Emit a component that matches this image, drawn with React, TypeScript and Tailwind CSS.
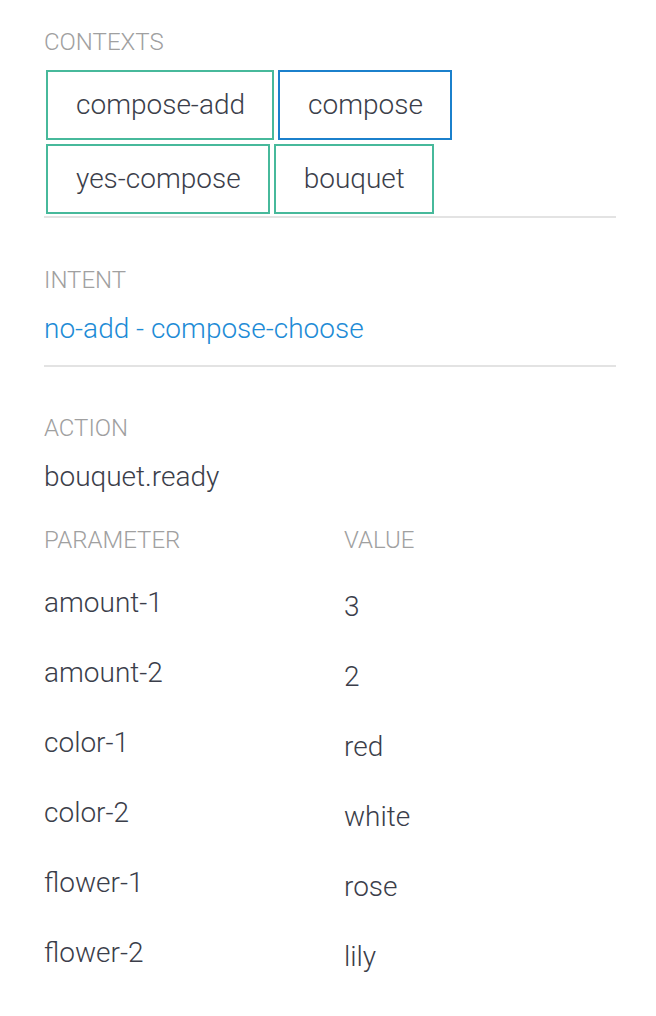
import React from "react";

const contexts = [
  { name: "compose-add", active: false },
  { name: "compose", active: true },
  { name: "yes-compose", active: false },
  { name: "bouquet", active: false },
];

const params = [
  ["amount-1", "3"],
  ["amount-2", "2"],
  ["color-1", "red"],
  ["color-2", "white"],
  ["flower-1", "rose"],
  ["flower-2", "lily"],
];

function Label({ children }: { children: React.ReactNode }) {
  return (
    <div className="text-[24px] leading-[28px] text-[#a0a0a0] uppercase">
      {children}
    </div>
  );
}

export default function App() {
  return (
    <div
      className="min-h-screen w-full bg-white pl-[44px] pr-[40px] font-light text-[#3b3e4a]"
      style={{ fontFamily: "Roboto, 'Liberation Sans', sans-serif" }}
    >
      {/* Contexts */}
      <div className="pt-[28px]">
        <Label>Contexts</Label>
        <div className="mt-[12px] flex flex-wrap">
          {contexts.map((c) => (
            <div
              key={c.name}
              className={
                "m-[2px] flex h-[70px] items-center border-2 pl-[28px] pr-[27px] text-[28px] " +
                (c.active ? "border-[#1b80cc]" : "border-[#47b99b]")
              }
            >
              {c.name}
            </div>
          ))}
        </div>
        <div className="h-[2px] bg-[#e3e3e3]" />
      </div>

      {/* Intent */}
      <div className="pt-[48px]">
        <Label>Intent</Label>
        <div className="mt-[17px] text-[28px] leading-[36px] text-[#1d8bd6]">
          no-add - compose-choose
        </div>
        <div className="mt-[18px] h-[2px] bg-[#e3e3e3]" />
      </div>

      {/* Action */}
      <div className="pt-[47px]">
        <Label>Action</Label>
        <div className="mt-[17px] text-[28px] leading-[36px]">bouquet.ready</div>

        <div className="mt-[31px] flex">
          <div className="w-[300px]">
            <Label>Parameter</Label>
          </div>
          <Label>Value</Label>
        </div>

        <div className="mt-[14px]">
          {params.map(([k, v]) => (
            <div key={k} className="flex h-[70px] items-center text-[28px] leading-[36px]">
              <div className="w-[300px]">{k}</div>
              <div className="mt-[8px]">{v}</div>
            </div>
          ))}
        </div>
      </div>
    </div>
  );
}
